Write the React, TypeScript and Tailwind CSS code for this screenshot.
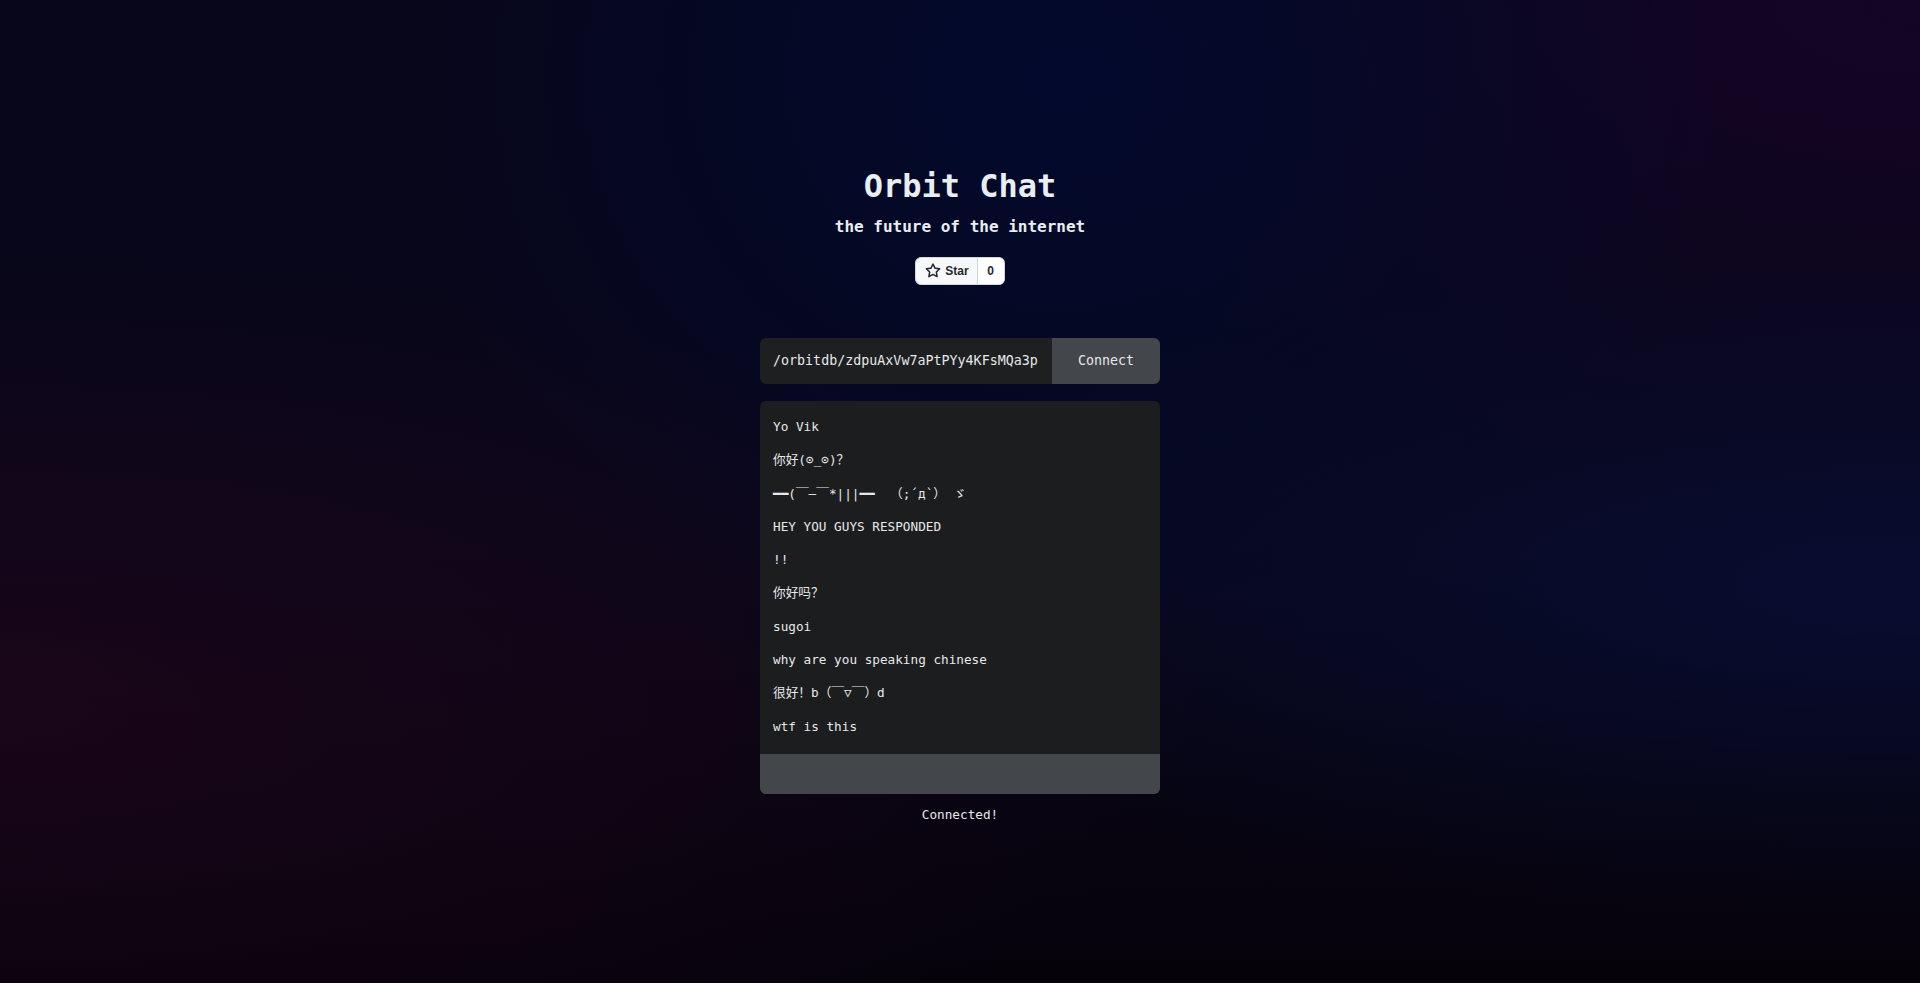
import React from "react";

const messages = [
  "Yo Vik",
  "你好(⊙_⊙)？",
  "━━(￣—￣*|||━━  （;´д`） ゞ",
  "HEY YOU GUYS RESPONDED",
  "!!",
  "你好吗？",
  "sugoi",
  "why are you speaking chinese",
  "很好！b（￣▽￣）d",
  "wtf is this",
];

const StarIcon = () => (
  <svg viewBox="0 0 16 16" width="16" height="16" fill="currentColor" aria-hidden="true">
    <path d="M8 .25a.75.75 0 0 1 .673.418l1.882 3.815 4.21.612a.75.75 0 0 1 .416 1.279l-3.046 2.97.719 4.192a.751.751 0 0 1-1.088.791L8 12.347l-3.766 1.98a.75.75 0 0 1-1.088-.79l.72-4.194L.818 6.374a.75.75 0 0 1 .416-1.28l4.21-.611L7.327.668A.75.75 0 0 1 8 .25Zm0 2.445L6.615 5.5a.75.75 0 0 1-.564.41l-3.097.45 2.24 2.184a.75.75 0 0 1 .216.664l-.528 3.084 2.769-1.456a.75.75 0 0 1 .698 0l2.77 1.456-.53-3.084a.75.75 0 0 1 .216-.664l2.24-2.183-3.096-.45a.75.75 0 0 1-.564-.41L8 2.694Z" />
  </svg>
);

export default function App() {
  return (
    <div className="min-h-[983px] w-full flex flex-col items-center bg-[#08061a] bg-[radial-gradient(ellipse_at_55%_8%,rgba(1,10,48,0.85),transparent_45%),radial-gradient(ellipse_at_98%_60%,rgba(8,14,52,0.85),transparent_40%),radial-gradient(ellipse_at_0%_72%,rgba(32,6,26,0.75),transparent_45%),radial-gradient(ellipse_at_100%_0%,rgba(26,4,42,0.7),transparent_35%),linear-gradient(to_bottom,transparent_55%,rgba(5,2,8,0.9))] font-['DejaVu_Sans_Mono','Noto_Sans_CJK_SC',monospace] text-[#e6e8ea]">
      {/* Header */}
      <h1 className="pt-[166px] text-[32px] leading-[40px] font-bold text-[#e8eef2]">Orbit Chat</h1>
      <p className="mt-[9px] text-[16px] leading-[24px] font-bold text-[#e8eef2]">the future of the internet</p>

      {/* GitHub star */}
      <div className="mt-[18px] flex h-[28px] rounded-[6px] border border-[#d0d7de] bg-[#f6f8fa] font-['Liberation_Sans',sans-serif] text-[12px] font-bold text-[#24292f] overflow-hidden">
        <div className="flex items-center gap-[4px] pl-[9px] pr-[8px]">
          <StarIcon />
          <span>Star</span>
        </div>
        <div className="flex items-center justify-center w-[27px] border-l border-[#d0d7de] bg-white">0</div>
      </div>

      {/* Connect bar */}
      <div className="mt-[53px] flex w-[400px] h-[46px] rounded-[6px] overflow-hidden">
        <div className="flex-1 flex items-center bg-[#1d1f21] pl-[13px] text-[13.33px] text-[#e6e8ea] whitespace-nowrap overflow-hidden">
          /orbitdb/zdpuAxVw7aPtPYy4KFsMQa3p
        </div>
        <button className="w-[108px] bg-[#43464b] text-[13.33px] text-[#e6e8ea]">Connect</button>
      </div>

      {/* Chat panel */}
      <div className="mt-[17px] w-[400px] h-[393px] rounded-[6px] overflow-hidden flex flex-col bg-[#1c1d1f]">
        <div className="flex-1 flex flex-col gap-[13.3px] pt-[16px] px-[13px] text-[12.7px] leading-[20px] text-[#e6e8ea]">
          {messages.map((m, i) => (
            <div key={i} className="whitespace-pre">{m}</div>
          ))}
        </div>
        <div className="h-[40px] bg-[#43464a]" />
      </div>

      <p className="mt-[11px] text-[12.7px] leading-[20px] text-[#e6e8ea]">Connected!</p>
    </div>
  );
}
